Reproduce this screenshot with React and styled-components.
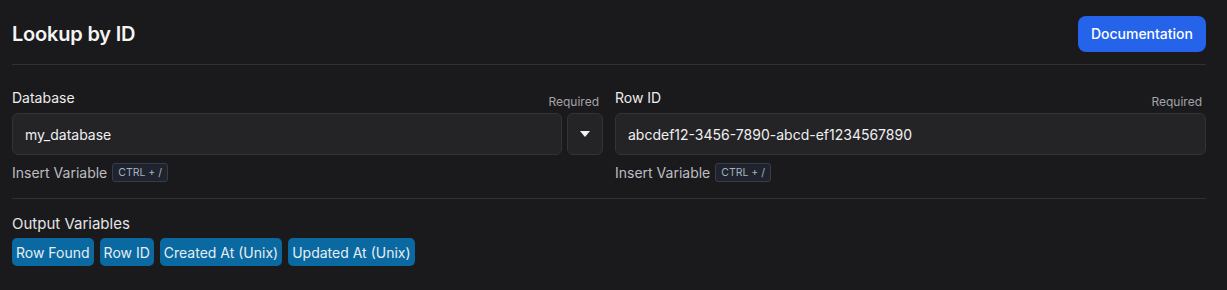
import React from 'react';
import styled, { createGlobalStyle } from 'styled-components';

const GlobalStyle = createGlobalStyle`
  html, body {
    margin: 0;
    padding: 0;
    background: #1a1a1c;
    font-family: Inter, "Noto Sans", sans-serif;
    color: #ececed;
  }
`;

const Page = styled.div`
  width: 1227px;
  height: 290px;
  box-sizing: border-box;
  padding: 0 21px 0 12px;
  background: #1a1a1c;
`;

const Header = styled.div`
  display: flex;
  align-items: center;
  justify-content: space-between;
  height: 65px;
  border-bottom: 1px solid #313134;
  box-sizing: border-box;
  padding-top: 3px;
`;

const Title = styled.h1`
  margin: 0;
  font-size: 20px;
  font-weight: 600;
  color: #f4f4f5;
  letter-spacing: -0.2px;
`;

const DocButton = styled.button`
  height: 36px;
  padding: 0 13px;
  border: none;
  border-radius: 8px;
  background: #2563eb;
  color: #fff;
  font-family: inherit;
  font-size: 14px;
  font-weight: 500;
  cursor: pointer;
`;

const Fields = styled.div`
  display: grid;
  grid-template-columns: 1fr 1fr;
  gap: 12px;
  padding: 23px 0 16px;
  border-bottom: 1px solid #313134;
`;

const Field = styled.div`
  display: flex;
  flex-direction: column;
`;

const LabelRow = styled.div`
  display: flex;
  justify-content: space-between;
  align-items: flex-end;
  height: 25px;
`;

const Label = styled.span`
  font-size: 14px;
  font-weight: 400;
  color: #ececed;
  line-height: 20px;
  align-self: flex-start;
`;

const Required = styled.span`
  font-size: 12px;
  color: #a3a3a8;
  line-height: 16px;
  margin-right: 4px;
  margin-bottom: 3px;
`;

const InputRow = styled.div`
  display: flex;
  gap: 5px;
`;

const Input = styled.div`
  flex: 1;
  height: 42px;
  box-sizing: border-box;
  display: flex;
  align-items: center;
  padding: 0 12px;
  background: #242426;
  border: 1px solid #333336;
  border-radius: 6px;
  font-size: 14px;
  color: #f0f0f1;
`;

const SelectButton = styled.div`
  width: 36px;
  height: 42px;
  box-sizing: border-box;
  display: flex;
  align-items: center;
  justify-content: center;
  background: #242426;
  border: 1px solid #333336;
  border-radius: 6px;
`;

const Hint = styled.div`
  display: flex;
  align-items: center;
  gap: 5px;
  margin-top: 8px;
  font-size: 14px;
  color: #bdbdc2;
`;

const Kbd = styled.span`
  font-size: 10.5px;
  padding: 1px 5px;
  line-height: 15px;
  border: 1px solid #363c4a;
  background: #1f232d;
  border-radius: 3px;
  color: #a9afbd;
`;

const Outputs = styled.div`
  padding-top: 15px;
`;

const OutputTitle = styled.div`
  font-size: 15px;
  color: #e4e4e7;
  line-height: 20px;
`;

const Badges = styled.div`
  display: flex;
  gap: 6px;
  margin-top: 4px;
`;

const Badge = styled.span`
  height: 28px;
  display: flex;
  align-items: center;
  padding: 0 4px;
  background: #0969a0;
  border-radius: 5px;
  font-size: 14px;
  color: #e6eef4;
`;

const Caret = () => (
  <svg width="10" height="6" viewBox="0 0 10 6">
    <path d="M0 0 H10 L5 6 Z" fill="#f2f2f2" />
  </svg>
);

const outputs = ['Row Found', 'Row ID', 'Created At (Unix)', 'Updated At (Unix)'];

export default function App() {
  return (
    <>
      <GlobalStyle />
      <Page>
        <Header>
          <Title>Lookup by ID</Title>
          <DocButton>Documentation</DocButton>
        </Header>
        <Fields>
          <Field>
            <LabelRow>
              <Label>Database</Label>
              <Required>Required</Required>
            </LabelRow>
            <InputRow>
              <Input>my_database</Input>
              <SelectButton><Caret /></SelectButton>
            </InputRow>
            <Hint>Insert Variable <Kbd>CTRL + /</Kbd></Hint>
          </Field>
          <Field>
            <LabelRow>
              <Label>Row ID</Label>
              <Required>Required</Required>
            </LabelRow>
            <InputRow>
              <Input>abcdef12-3456-7890-abcd-ef1234567890</Input>
            </InputRow>
            <Hint>Insert Variable <Kbd>CTRL + /</Kbd></Hint>
          </Field>
        </Fields>
        <Outputs>
          <OutputTitle>Output Variables</OutputTitle>
          <Badges>
            {outputs.map((o) => <Badge key={o}>{o}</Badge>)}
          </Badges>
        </Outputs>
      </Page>
    </>
  );
}
